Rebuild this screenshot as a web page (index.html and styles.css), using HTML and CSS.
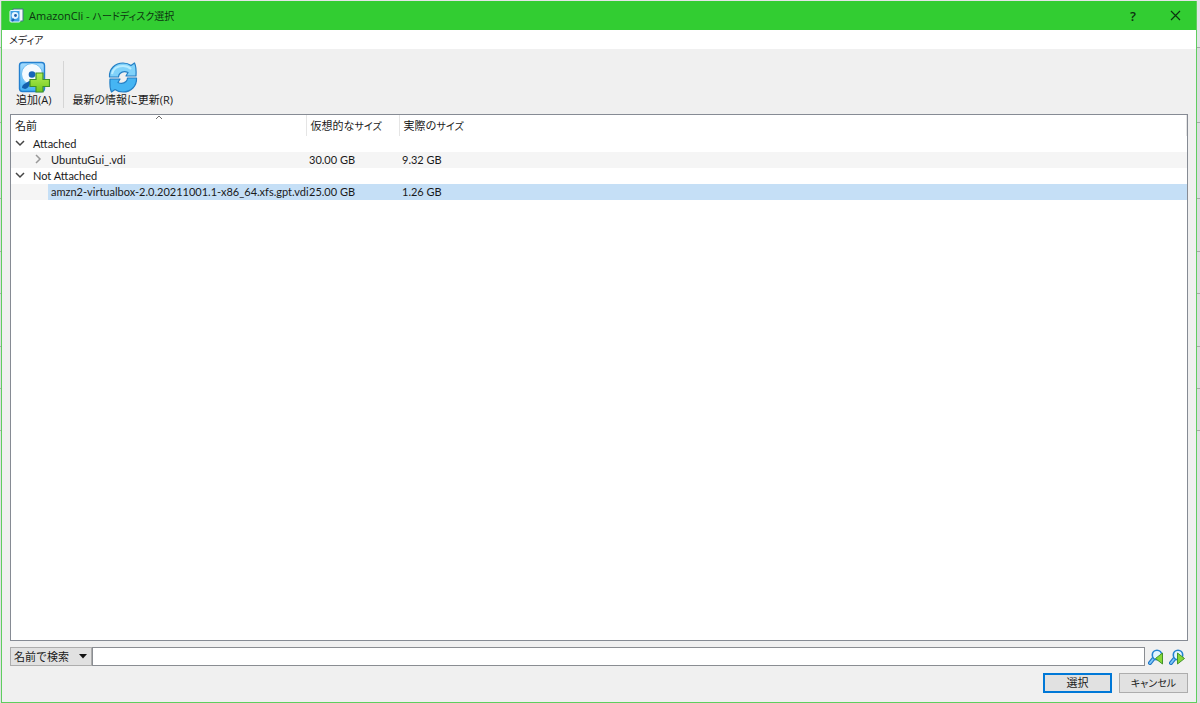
FILE: index.html
```
<!DOCTYPE html>
<html lang="ja">
<head>
  <meta charset="UTF-8" />
  <title>AmazonCli - ハードディスク選択</title>
  <link rel="stylesheet" href="styles.css">
</head>
<body>
  <div class="window">
    <header class="titlebar">
      <svg class="app-icon" width="15" height="15" viewBox="0 0 15 15">
        <path d="M4 1h10v12H4z" fill="#f4f8fb" stroke="#45758f"/>
        <rect x="1" y="2.500" width="10" height="11.500" rx="1" fill="#3f9fe4" stroke="#e6f5ff"/>
        <circle cx="6" cy="7.5" r="3.4" fill="#e4f4ff"/>
        <circle cx="6.500" cy="7.5" r="1.4" fill="#1d5fae"/>
        <path d="M3 13l2-2" stroke="#1d5fae" stroke-width="2"/>
      </svg>
      <h1>AmazonCli - <span class="kana">ハードディスク選択</span></h1>
      <button type="button" class="caption help" aria-label="ヘルプ">?</button>
      <button type="button" class="caption" aria-label="閉じる">
        <svg width="11" height="11" viewBox="0 0 11 11"><path d="M1 1l9 9M10 1l-9 9" stroke="#0c3310" stroke-width="1.2"/></svg>
      </button>
    </header>

    <nav class="menubar">
      <button type="button" class="kana">メディア</button>
    </nav>

    <div class="toolbar">
      <button type="button" class="tool">
        <svg width="32" height="32" viewBox="0 0 32 32">
          <defs>
            <linearGradient id="disk" x1="0" y1="0" x2="0" y2="1">
              <stop offset="0" stop-color="#a5dcff"/><stop offset="1" stop-color="#45b2f5"/>
            </linearGradient>
            <linearGradient id="plus" x1="0" y1="0" x2="0" y2="1">
              <stop offset="0" stop-color="#b5ef55"/><stop offset="1" stop-color="#70c820"/>
            </linearGradient>
          </defs>
          <rect x="1.5" y="1.5" width="25" height="29" rx="3" fill="url(#disk)" stroke="#2380cf" stroke-width="1.4"/>
          <circle cx="14" cy="13" r="10.500" fill="#f5fbff" stroke="#6fbdf0"/>
          <circle cx="14" cy="13.500" r="3.300" fill="#1766b8"/>
          <path d="M4 27c0-3 2-4 4-5s4-3 5-2-1 3-2 5-3 3-4 3z" fill="#145fae"/>
          <path d="M18 12h7v6.500h6.500v7H25V31h-7v-5.500h-6v-7h6z" fill="url(#plus)" stroke="#3f9128" stroke-width="1.2"/>
        </svg>
        <span>追加(A)</span>
      </button>
      <span class="divider"></span>
      <button type="button" class="tool">
        <svg width="32" height="32" viewBox="0 0 32 32">
          <path d="M2.500 16C2 8 8 2 16 2c4 0 6 1 8 2.500L27.500 2c1.500 3 1.800 8 1.500 13H19l2-3.500c-3-1.500-6-1-8 1-1 1-1.500 2-1.500 3.500z" fill="#80d2fa" stroke="#237fc5" stroke-width="1.200" stroke-linejoin="round"/>
          <path d="M29.500 17C30 25 24 31 16 31c-4 0-6-1-8-2.500L4.500 31C3 28 2.700 23 3 18H13l-2 3.500c3 1.500 6 1 8-1 1-1 1.500-2 1.500-3.500z" fill="#45b5f3" stroke="#237fc5" stroke-width="1.200" stroke-linejoin="round"/>
          <path d="M5 13c1-5 5-8 11-8 4 0 6 1 8 3" fill="none" stroke="#b9ecff" stroke-width="2"/>
        </svg>
        <span>最新の情報に更新(R)</span>
      </button>
    </div>

    <main class="tree">
      <svg class="sort" width="8" height="5" viewBox="0 0 8 5"><path d="M1 4l3-3 3 3" fill="none" stroke="#6d6d6d"/></svg>
      <table>
        <colgroup>
          <col class="col-name">
          <col class="col-size">
          <col>
        </colgroup>
        <thead>
          <tr>
            <th>名前</th>
            <th>仮想的な<span class="kana">サイズ</span></th>
            <th>実際の<span class="kana">サイズ</span></th>
          </tr>
        </thead>
        <tbody>
          <tr>
            <td class="group" colspan="3">
              <svg class="arrow" width="10" height="10" viewBox="0 0 10 10"><path d="M1 3l4 4 4-4" fill="none" stroke="#444" stroke-width="1.500"/></svg>Attached
            </td>
          </tr>
          <tr class="alt">
            <td class="item">
              <svg class="arrow" width="10" height="10" viewBox="0 0 10 10"><path d="M3 1l4 4-4 4" fill="none" stroke="#999" stroke-width="1.500"/></svg><span class="name">UbuntuGui_.vdi</span>
            </td>
            <td>30.00 GB</td>
            <td>9.32 GB</td>
          </tr>
          <tr>
            <td class="group" colspan="3">
              <svg class="arrow" width="10" height="10" viewBox="0 0 10 10"><path d="M1 3l4 4 4-4" fill="none" stroke="#444" stroke-width="1.500"/></svg>Not Attached
            </td>
          </tr>
          <tr class="alt selected">
            <td class="item leaf"><span class="name">amzn2-virtualbox-2.0.20211001.1-x86_64.xfs.gpt.vdi</span></td>
            <td>25.00 GB</td>
            <td>1.26 GB</td>
          </tr>
        </tbody>
      </table>
    </main>

    <form class="dialog-form">
      <div class="search">
        <div class="search-type">
          <select aria-label="検索の種類">
            <option>名前で検索</option>
          </select>
          <svg class="drop" width="8" height="5" viewBox="0 0 8 5"><path d="M0 0h8L4 4.500z" fill="#111"/></svg>
        </div>
        <input type="text" aria-label="検索">
        <button type="button" class="find" aria-label="前を検索">
          <svg width="16" height="16" viewBox="0 0 16 16">
            <path d="M2 14l4-5" stroke="#1d73c4" stroke-width="4" stroke-linecap="round"/>
            <path d="M2 14l4-5" stroke="#7cc8fa" stroke-width="2" stroke-linecap="round"/>
            <circle cx="9" cy="6" r="4.700" fill="#e2f5ff" stroke="#2383cf" stroke-width="1.600"/>
            <path d="M14.500 4v11L7.500 9.500z" fill="#87d837" stroke="#43942a"/>
          </svg>
        </button>
        <button type="button" class="find" aria-label="次を検索">
          <svg width="16" height="16" viewBox="0 0 16 16">
            <path d="M2 14l4-5" stroke="#1d73c4" stroke-width="4" stroke-linecap="round"/>
            <path d="M2 14l4-5" stroke="#7cc8fa" stroke-width="2" stroke-linecap="round"/>
            <circle cx="9" cy="6" r="4.700" fill="#e2f5ff" stroke="#2383cf" stroke-width="1.600"/>
            <path d="M8.500 4v11L15.500 9.500z" fill="#87d837" stroke="#43942a"/>
          </svg>
        </button>
      </div>
      <div class="actions">
        <button type="button" class="btn primary">選択</button>
        <button type="button" class="btn kana">キャンセル</button>
      </div>
    </form>
  </div>
</body>
</html>
```

FILE: styles.css
```
* {
  box-sizing: border-box;
}
body {
  margin: 0;
  height: 100vh;
  padding: 1px 3px 0 1px;
  /* rows of the window behind */
  background: linear-gradient(#e4e4e8 47px, #aaa 47px 48px, #dcdce0 48px 122px, #aaa 122px 123px, #dcdce0 123px 198px, #aaa 198px 199px, #dcdce0 199px 251px, #aaa 251px 252px, #dcdce0 252px 293px, #aaa 293px 294px, #dcdce0 294px 346px, #aaa 346px 347px, #dcdce0 347px 388px, #aaa 388px 389px, #dcdce0 389px 430px, #aaa 430px 431px, #e0e0e4 431px);
  font-family: "Open Sans", "Noto Sans CJK JP", sans-serif;
  font-size: 11px;
  color: #1a1a1a;
}
button, input, select {
  font: inherit;
  color: inherit;
}
button {
  padding: 0;
  border: none;
  background: none;
}
svg {
  display: block;
}
/* proportional kana */
.kana {
  font-size: 10px;
  font-feature-settings: "palt";
}
.window {
  height: 100%;
  display: flex;
  flex-direction: column;
  background: #f0f0f0;
  border: 1px solid #5fce5f;
  border-top: none;
}

.titlebar {
  display: flex;
  align-items: center;
  height: 29px;
  padding-left: 7px;
  background: #32cd32;
  color: #0c3310;
}
.titlebar h1 {
  flex: 1;
  margin: 0 0 0 5px;
  font-size: 11px;
  font-weight: normal;
  line-height: 15px;
}
.caption {
  display: flex;
  align-items: center;
  justify-content: center;
  width: 42px;
  height: 29px;
}
.help {
  font-size: 13px;
  font-weight: 600;
}

.menubar {
  display: flex;
  align-items: center;
  height: 19px;
  padding-left: 7px;
  background: #fff;
}

.toolbar {
  display: flex;
  height: 65px;
  padding: 12px 0 6px 12px;
}
.tool {
  display: flex;
  flex-direction: column;
  align-items: center;
  padding: 0 2px;
  white-space: nowrap;
  line-height: 14px;
  font-feature-settings: "palt";
}
.divider {
  width: 1px;
  margin: 0 6px 0 10px;
  background: #d5d5d5;
}

.tree {
  position: relative;
  flex: 1;
  margin: 0 8px;
  background: #fff;
  border: 1px solid #868b94;
}
.sort {
  position: absolute;
  top: 0;
  left: 144px;
}
table {
  width: 100%;
  table-layout: fixed;
  border-collapse: collapse;
}
.col-name {
  width: 295px;
}
.col-size {
  width: 93px;
}
th {
  height: 21px;
  padding: 0 4px;
  border-right: 1px solid #e5e5e5;
  text-align: left;
  font-weight: normal;
  line-height: 20px;
}
td {
  height: 16px;
  padding: 0 3px;
  font-family: Lato, "Noto Sans CJK JP", sans-serif;
  line-height: 16px;
  white-space: nowrap;
}
.alt {
  background: #f5f5f5;
}
.group {
  padding-left: 4px;
}
.arrow {
  display: inline-block;
  margin-right: 8px;
}
.item {
  padding: 0 0 0 22px;
}
.item .arrow {
  margin-right: 5px;
}
.name {
  display: inline-block;
  padding-left: 3px;
}
.leaf {
  padding-left: 37px;
}
.selected td {
  background: #c5dff6;
}
.selected .leaf {
  background: linear-gradient(to right, #f5f5f5 37px, #c5dff6 37px);
}

.dialog-form {
  padding: 6px 8px 9px;
}
.search {
  display: flex;
  height: 19px;
}
.search-type {
  position: relative;
}
.search select {
  display: block;
  appearance: none;
  width: 82px;
  height: 19px;
  padding: 0 3px;
  border: 1px solid #adadad;
  border-radius: 0;
  background: #e1e1e1;
}
.drop {
  position: absolute;
  top: 7px;
  right: 5px;
  pointer-events: none;
}
.search input {
  flex: 1;
  min-width: 0;
  padding: 0 4px;
  border: 1px solid #8a8d92;
  background: #fff;
}
.find {
  width: 16px;
  margin-left: 3px;
}
.find + .find {
  margin: 0 3px 0 5px;
}
.actions {
  display: flex;
  justify-content: flex-end;
  gap: 7px;
  margin-top: 7px;
}
.btn {
  width: 69px;
  height: 20px;
  border: 1px solid #adadad;
  background: #e1e1e1;
  line-height: 16px;
}
.primary {
  border: 2px solid #0078d7;
}
```
